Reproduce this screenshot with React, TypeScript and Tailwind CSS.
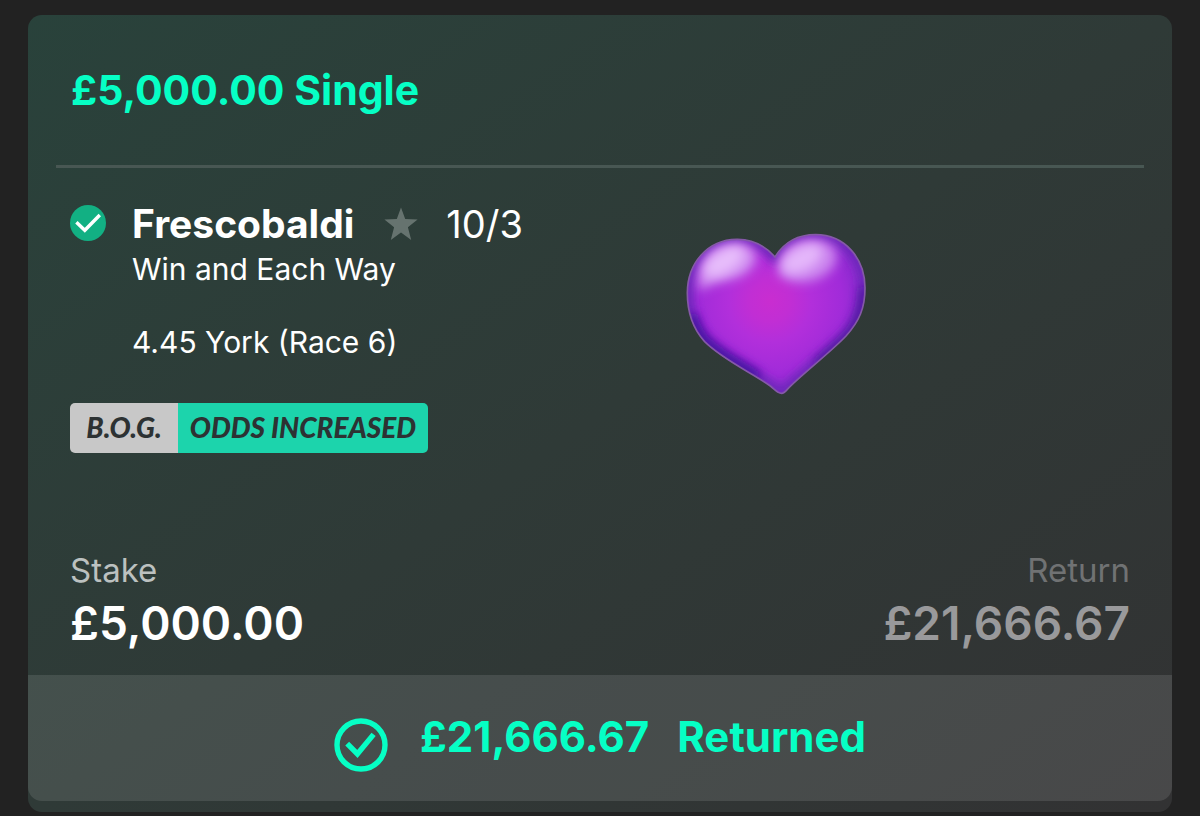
type AmountProps = {
  label: string;
  value: string;
  muted?: boolean;
};

function Amount({ label, value, muted = false }: AmountProps) {
  return (
    <div className={muted ? "text-right" : ""}>
      <dt
        className={
          muted
            ? "text-[33px] leading-10 text-[#707273]"
            : "text-[33px] leading-10 text-[#bcc1c0]"
        }
      >
        {label}
      </dt>
      <dd
        className={
          muted
            ? "mt-[5px] text-[46px] leading-14 font-semibold text-[#99999b]"
            : "mt-[5px] text-[46px] leading-14 font-semibold text-white"
        }
      >
        {value}
      </dd>
    </div>
  );
}

function WonIcon() {
  return (
    <svg viewBox="0 0 36 36" className="size-9 shrink-0" aria-hidden="true">
      <circle cx="18" cy="18" r="18" fill="#12b083" />
      <path d="M6.4 17.2 14.8 25.3 29.8 10" fill="none" stroke="#fff" strokeWidth="3.4" />
    </svg>
  );
}

function StarIcon() {
  return (
    <svg viewBox="0 0 34 34" className="size-[34px] shrink-0" aria-hidden="true">
      <path
        d="M17 .5 21.2 12.1 33.6 12.6 23.9 20.3 27.2 33 17 25.6 6.8 33 10.1 20.3.4 12.6 12.8 12.1Z"
        fill="#66736f"
      />
    </svg>
  );
}

function ReturnedIcon() {
  return (
    <svg viewBox="0 0 54 54" className="size-[54px] shrink-0" aria-hidden="true">
      <circle cx="27" cy="27" r="24" fill="none" stroke="#06ffc5" strokeWidth="5.4" />
      <path d="M13.2 25.6 23.4 36 39.6 16.4" fill="none" stroke="#06ffc5" strokeWidth="5.4" />
    </svg>
  );
}

const heartPath =
  "M335 517C322 517 314 505 301 495C250 458 158 416 104 362C66 320 52 270 52 216C52 128 112 56 200 55C252 54 290 80 315 108C340 68 382 41 437 41C524 41 585 112 585 200C585 262 568 300 528 345C484 392 388 466 352 505C346 512 342 517 335 517Z";

function PurpleHeart() {
  return (
    <svg viewBox="48 36 540 486" className="h-[162px] w-[180px]" role="img" aria-label="Purple heart">
      <defs>
        <radialGradient id="heart-base" gradientUnits="userSpaceOnUse" cx="300" cy="240" r="310">
          <stop offset="0" stopColor="#c92dd0" />
          <stop offset="0.2" stopColor="#c12ed4" />
          <stop offset="0.4" stopColor="#b22fdb" />
          <stop offset="0.7" stopColor="#a12bd9" />
          <stop offset="1" stopColor="#7d2ac8" />
        </radialGradient>
        <filter id="heart-soft" x="-50%" y="-50%" width="200%" height="200%">
          <feGaussianBlur stdDeviation="14" />
        </filter>
        <filter id="heart-gloss" x="-50%" y="-50%" width="200%" height="200%">
          <feGaussianBlur stdDeviation="16" />
        </filter>
        <clipPath id="heart-clip">
          <path d={heartPath} />
        </clipPath>
      </defs>
      <path d={heartPath} fill="url(#heart-base)" />
      <g clipPath="url(#heart-clip)">
        <path
          d={heartPath}
          fill="none"
          stroke="#6a25b8"
          strokeWidth="32"
          filter="url(#heart-soft)"
        />
        <path
          d="M66 280C80 350 120 375 180 415L265 468"
          fill="none"
          stroke="#4311a0"
          strokeWidth="30"
          filter="url(#heart-soft)"
        />
        <path
          d="M582 200C578 300 544 344 504 374L440 430"
          fill="none"
          stroke="#4c159c"
          strokeWidth="24"
          filter="url(#heart-soft)"
        />
        <path
          d="M90 210C72 130 122 68 200 68C272 72 268 122 232 152C192 186 132 172 90 210Z"
          fill="#d292f1"
          filter="url(#heart-gloss)"
        />
        <path
          d="M326 160C322 90 376 56 436 58C508 60 514 118 480 150C436 192 366 194 326 160Z"
          fill="#cb84ee"
          filter="url(#heart-gloss)"
        />
        <ellipse
          cx="162"
          cy="122"
          rx="66"
          ry="32"
          fill="#e7bdfb"
          transform="rotate(-32 162 122)"
          filter="url(#heart-gloss)"
        />
        <ellipse
          cx="396"
          cy="114"
          rx="66"
          ry="36"
          fill="#e4b6fa"
          transform="rotate(-28 396 114)"
          filter="url(#heart-gloss)"
        />
      </g>
      <path d={heartPath} fill="none" stroke="#8558a8" strokeWidth="5" />
    </svg>
  );
}

export default function App() {
  return (
    <main className="min-h-screen bg-[#222222] px-7 pt-[15px] pb-1 font-['Inter',sans-serif] text-white">
      <article className="relative rounded-[14px] bg-linear-to-br from-[#29423b] via-[#2f3a37] to-[#323233] pb-[11px]">
        <header className="px-[43px]">
          <h1 className="text-[41px] leading-[150px] font-bold text-[#06ffc5]">
            £5,000.00 Single
          </h1>
        </header>
        <hr className="mx-7 border-t-3 border-[#485753]" />

        <section className="px-[42px] pt-8">
          <div className="flex gap-[26px]">
            <div className="flex h-[46px] items-center">
              <WonIcon />
            </div>
            <div>
              <div className="flex h-12 items-center">
                <h2 className="text-[39px] font-bold">Frescobaldi</h2>
                <span className="ml-[30px] flex">
                  <StarIcon />
                </span>
                <span className="ml-7 text-[38px]">10/3</span>
              </div>
              <p className="text-[30px] leading-[42px]">Win and Each Way</p>
              <p className="mt-[31px] text-[30px] leading-[42px]">4.45 York (Race 6)</p>
            </div>
          </div>

          <div className="mt-10 inline-flex h-[50px] overflow-hidden rounded-[5px] align-top font-['Lato',sans-serif] text-[28px] leading-[48px] font-black text-[#2d3233] italic">
            <span className="w-[108px] bg-[#c8c8c8] text-center">B.O.G.</span>
            <span className="w-[250px] bg-[#1cd4ac] text-center">ODDS INCREASED</span>
          </div>
        </section>

        <dl className="mt-[97px] flex justify-between px-[42px] pb-6">
          <Amount label="Stake" value="£5,000.00" />
          <Amount label="Return" value="£21,666.67" muted />
        </dl>

        <footer className="flex h-[126px] items-center justify-center rounded-b-[14px] bg-white/11">
          <div className="flex items-end gap-8">
            <ReturnedIcon />
            <p className="flex h-[68px] items-start gap-7 text-[42px] leading-[66px] font-bold text-[#06ffc5]">
              <span>£21,666.67</span>
              <span>Returned</span>
            </p>
          </div>
        </footer>

        <div className="absolute top-[218px] left-[57.5%]">
          <PurpleHeart />
        </div>
      </article>
    </main>
  );
}
